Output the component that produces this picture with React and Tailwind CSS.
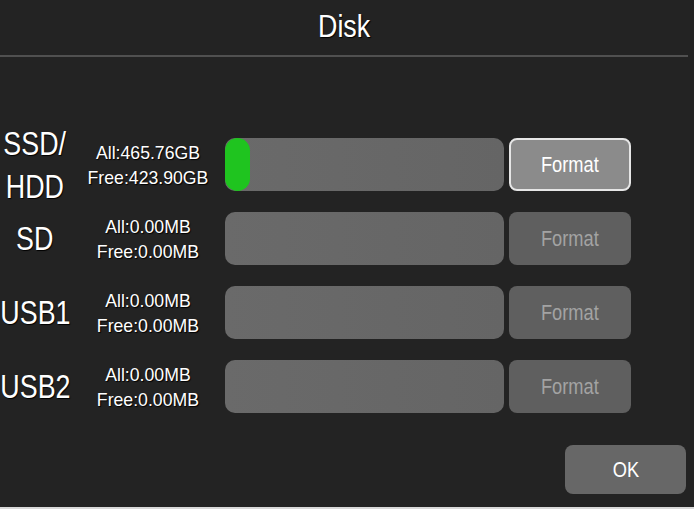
import React from 'react';

const font = { fontFamily: '"Liberation Sans", Arial, sans-serif' };

const disks = [
    { name: ['SSD/', 'HDD'], all: '465.76GB', free: '423.90GB', used: 0.09, active: true },
    { name: ['SD'], all: '0.00MB', free: '0.00MB', used: 0, active: false },
    { name: ['USB1'], all: '0.00MB', free: '0.00MB', used: 0, active: false },
    { name: ['USB2'], all: '0.00MB', free: '0.00MB', used: 0, active: false },
];

// the device font is condensed, squeeze Liberation Sans to match
const Narrow = ({ children, className = '' }) => (
    <span className={`inline-block whitespace-nowrap ${className}`}>{children}</span>
);

const DiskRow = ({ disk }) => (
    <div className="flex items-center h-[53px]">
        {/* Device name */}
        <div className="w-[70px] shrink-0 flex flex-col items-center text-[34px] leading-[43px] text-white [text-shadow:1px_1px_1px_#000]" style={font}>
            {disk.name.map(n => <Narrow key={n} className="scale-x-[0.79]">{n}</Narrow>)}
        </div>

        {/* Capacity */}
        <div className="w-[155px] shrink-0 flex flex-col items-center text-[19px] leading-[25px] text-white [text-shadow:1px_1px_1px_#000]" style={font}>
            <Narrow className="scale-x-[0.93]">All:{disk.all}</Narrow>
            <Narrow className="scale-x-[0.93]">Free:{disk.free}</Narrow>
        </div>

        {/* Usage bar */}
        <div className="w-[279px] h-[53px] shrink-0 rounded-[10px] bg-gradient-to-r from-[#6a6a6a] to-[#656565] overflow-hidden">
            {disk.used > 0 && (
                <div className="h-full rounded-full bg-[#1fc41f]" style={{ width: `${disk.used * 100}%` }}></div>
            )}
        </div>

        {/* Format */}
        <button
            className={`ml-[5px] w-[122px] h-[53px] shrink-0 rounded-[8px] text-[22px] ${
                disk.active ? 'bg-[#8b8b8b] border-2 border-[#e6e6e6] text-white' : 'bg-[#5f5f5f] text-[#a3a3a3]'
            }`}
            style={font}
        >
            <Narrow className="scale-x-[0.83]">Format</Narrow>
        </button>
    </div>
);

export default function App() {
    return (
        <div className="w-[694px] h-[509px] bg-[#232323] flex flex-col overflow-hidden border-b-2 border-[#d9d9d9]">
            {/* Title */}
            <div className="h-[57px] shrink-0 flex items-center justify-center border-b-2 border-[#505050] mr-[6px] pb-[4px]">
                <h1 className="text-[32px] text-white [text-shadow:1px_1px_1px_#000]" style={font}>
                    <Narrow className="scale-x-[0.84]">Disk</Narrow>
                </h1>
            </div>

            {/* Disks */}
            <div className="flex flex-col gap-[21px] pt-[81px]">
                {disks.map((d, i) => <DiskRow key={i} disk={d} />)}
            </div>

            {/* Footer */}
            <div className="flex justify-end pr-[8px] mt-[32px]">
                <button className="w-[121px] h-[49px] rounded-[8px] bg-[#676767] text-white text-[22px]" style={font}>
                    <Narrow className="scale-x-[0.83]">OK</Narrow>
                </button>
            </div>
        </div>
    );
}
